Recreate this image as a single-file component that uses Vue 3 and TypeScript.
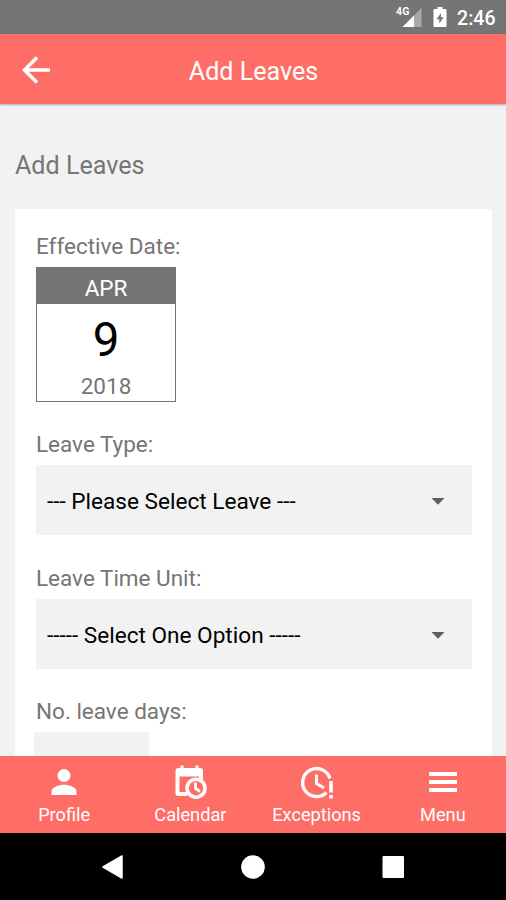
<script setup lang="ts">
import { ref } from 'vue'

interface SelectField {
  id: string
  label: string
  value: string
}

interface Tab {
  id: 'profile' | 'calendar' | 'exceptions' | 'menu'
  label: string
}

const title = ref('Add Leaves')
const date = ref({ month: 'APR', day: 9, year: 2018 })

const fields: SelectField[] = [
  { id: 'type', label: 'Leave Type:', value: '--- Please Select Leave ---' },
  { id: 'unit', label: 'Leave Time Unit:', value: '----- Select One Option -----' },
]

const tabs: Tab[] = [
  { id: 'profile', label: 'Profile' },
  { id: 'calendar', label: 'Calendar' },
  { id: 'exceptions', label: 'Exceptions' },
  { id: 'menu', label: 'Menu' },
]
</script>

<template>
  <div class="screen">
    <div class="status">
      <span class="network">
        <svg class="signal" width="26" height="22" viewBox="0 0 26 22">
          <path d="M25.500 2V21H6.500Z" fill="#a9a9a9" />
          <path d="M18 9.500V21H6.500Z" fill="#fff" />
        </svg>
        <span class="generation">4G</span>
      </span>
      <svg class="battery" width="14" height="22" viewBox="0 0 14 22">
        <path
          fill="#fff"
          fill-rule="evenodd"
          d="M4.500 1H9.500V3H12.200Q13.500 3 13.500 4.300V19.700Q13.500 21 12.200 21H1.800Q.5 21 .5 19.700V4.300Q.5 3 1.800 3H4.500ZM8 7L3.500 13.200H6.300V17.500L10.700 11.200H8Z"
        />
      </svg>
      <span class="clock">2:46</span>
    </div>

    <header class="header">
      <button class="back" type="button" aria-label="Back">
        <svg width="30" height="30" viewBox="0 0 30 30" fill="none" stroke="#fff" stroke-width="3.500">
          <path d="M29 15H4M16 2.500L3.500 15L16 27.500" />
        </svg>
      </button>
      <h1 class="title">{{ title }}</h1>
    </header>

    <main class="content">
      <h2 class="heading">{{ title }}</h2>
      <section class="card">
        <div class="label">Effective Date:</div>
        <div class="date">
          <div class="month">{{ date.month }}</div>
          <div class="day">{{ date.day }}</div>
          <div class="year">{{ date.year }}</div>
        </div>
        <div v-for="field in fields" :key="field.id" class="field">
          <div class="label">{{ field.label }}</div>
          <div class="select">
            <span class="value">{{ field.value }}</span>
            <svg class="caret" width="14" height="7" viewBox="0 0 14 7">
              <path d="M.5 0H13.500L7 6.800Z" fill="#5f5f5f" />
            </svg>
          </div>
        </div>
        <div class="field">
          <div class="label last">No. leave days:</div>
          <div class="days-input"></div>
        </div>
      </section>
    </main>

    <nav class="tabs">
      <div v-for="tab in tabs" :key="tab.id" class="tab">
        <svg v-if="tab.id === 'profile'" width="36" height="36" viewBox="0 0 36 36" fill="#fff">
          <circle cx="18" cy="11.500" r="6.500" />
          <path d="M5.500 31V27.500C5.500 23 13.500 20.700 18 20.700S30.500 23 30.500 27.500V31Z" />
        </svg>
        <svg v-else-if="tab.id === 'calendar'" width="36" height="36" viewBox="0 0 36 36">
          <path
            fill="#fff"
            fill-rule="evenodd"
            d="M8.500 1.500H11.500V4H23.500V1.500H26.500V4H28Q31 4 31 7V23H27V12.500H7.500V28H15V32H6.500Q3.500 32 3.500 29V7Q3.500 4 6.500 4H8.500Z"
          />
          <circle cx="24" cy="24.200" r="9" fill="#ff6e66" stroke="#fff" stroke-width="3.600" />
          <path d="M23.500 18.500V24.500L28 27.500" fill="none" stroke="#fff" stroke-width="2.800" />
        </svg>
        <svg v-else-if="tab.id === 'exceptions'" width="36" height="36" viewBox="0 0 36 36" fill="none" stroke="#fff">
          <path d="M31 14.500A14 14 0 1 0 27.500 28.500" stroke-width="3.400" />
          <path d="M17.500 10.500V19.500L25 24" stroke-width="3" />
          <path d="M32 17V28.500M32 31V34.500" stroke-width="3.600" />
        </svg>
        <svg v-else width="36" height="36" viewBox="0 0 36 36" fill="#fff">
          <path d="M4 8H32V12H4ZM4 16H32V20H4ZM4 24H32V28H4Z" />
        </svg>
        <span class="tab-label">{{ tab.label }}</span>
      </div>
    </nav>

    <div class="system">
      <svg width="26" height="26" viewBox="0 0 26 26">
        <path d="M22 2V24L3 13Z" fill="#fff" stroke="#fff" stroke-width="1.500" stroke-linejoin="round" />
      </svg>
      <svg width="26" height="26" viewBox="0 0 26 26"><circle cx="13" cy="13" r="11.800" fill="#fff" /></svg>
      <svg width="26" height="26" viewBox="0 0 26 26">
        <rect x="2.500" y="2" width="21.500" height="22" rx="1" fill="#fff" />
      </svg>
    </div>
  </div>
</template>

<style>
body {
  margin: 0;
  overflow: hidden;
}
</style>

<style scoped>
.screen {
  display: flex;
  flex-direction: column;
  width: 506px;
  height: 900px;
  overflow: hidden;
  background: #f2f2f2;
  font-family: Roboto, sans-serif;
  color: #757575;
}

.status {
  display: flex;
  flex: none;
  align-items: center;
  justify-content: flex-end;
  box-sizing: border-box;
  height: 34px;
  padding-right: 10.5px;
  background: #757575;
  color: #fff;
}

.network {
  position: relative;
  display: flex;
  margin-right: 11px;
}

.generation {
  position: absolute;
  top: 1px;
  left: 0;
  font-size: 10.5px;
  font-weight: 700;
  line-height: 10px;
}

.battery {
  margin-right: 10px;
}

.clock {
  padding-top: 3px;
  font-size: 19.5px;
  font-weight: 500;
  line-height: 25px;
}

.header {
  display: grid;
  flex: none;
  grid-template-columns: 81px 1fr 80px;
  align-items: center;
  height: 70px;
  background: #ff6e66;
  box-shadow: 0 1px 2px rgba(0, 0, 0, 0.3);
  color: #fff;
}

.back {
  display: flex;
  padding: 2px 0 0 21px;
  border: 0;
  background: none;
}

.title {
  margin: 6px 0 0;
  font-size: 25.1px;
  font-weight: 400;
  line-height: 30px;
  text-align: center;
}

.content {
  flex: 1;
  min-height: 0;
  padding: 47px 14px 0 15px;
  overflow: hidden;
}

.heading {
  margin: 0 0 28px;
  font-size: 25.1px;
  font-weight: 400;
  line-height: 30px;
}

.card {
  height: 700px;
  padding: 24px 20.5px 0 21px;
  background: #fff;
}

.label {
  height: 26px;
  font-size: 22.5px;
  line-height: 26px;
}

.label.last {
  line-height: 24px;
}

.date {
  box-sizing: border-box;
  width: 140px;
  height: 135px;
  margin: 8px 0 29px;
  border: 1px solid #757575;
  text-align: center;
}

.month {
  height: 36px;
  background: #757575;
  color: #fff;
  font-size: 22.5px;
  line-height: 41px;
}

.day {
  height: 67px;
  color: #000;
  font-size: 47.5px;
  line-height: 73px;
}

.year {
  font-size: 22.5px;
  line-height: 30px;
}

.field {
  margin-bottom: 30px;
}

.select {
  display: flex;
  align-items: center;
  justify-content: space-between;
  box-sizing: border-box;
  height: 70px;
  margin-top: 8px;
  padding: 2px 27px 0 11px;
  background: #f2f2f2;
  color: #000;
  font-size: 22.6px;
  white-space: nowrap;
}

.days-input {
  width: 114.5px;
  height: 70px;
  margin: 7px 0 0 -2px;
  background: #f2f2f2;
}

.tabs {
  display: grid;
  flex: none;
  grid-template-columns: repeat(4, 1fr);
  box-sizing: border-box;
  height: 77.5px;
  padding-left: 1px;
  background: #ff6e66;
  color: #fff;
}

.tab {
  display: flex;
  flex-direction: column;
  align-items: center;
  padding-top: 8px;
}

.tab-label {
  margin-top: 3px;
  font-size: 18.2px;
  line-height: 24px;
}

.system {
  display: flex;
  flex: none;
  align-items: center;
  justify-content: space-between;
  box-sizing: border-box;
  height: 67px;
  padding: 0 100px;
  background: #000;
}
</style>
